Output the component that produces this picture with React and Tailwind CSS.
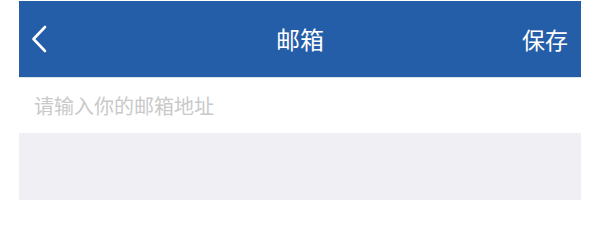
export default function App() {
	return (
		<div className="w-full h-[205px] bg-white pt-px" style={{ fontFamily: '"Noto Sans CJK SC", "Noto Sans", sans-serif' }}>
			<div className="ml-[19px] w-[562px]">
				{/* Header */}
				<div className="h-[76px] bg-[#245ea8] flex items-center justify-between relative text-white">
					<button className="w-[40px] h-full flex items-center pl-[12px]">
						<svg width="16" height="28" viewBox="0 0 16 28" fill="none">
							<path d="M14 2L2.5 14L14 26" stroke="white" strokeWidth="2.6" strokeLinecap="round" strokeLinejoin="round" />
						</svg>
					</button>
					<h1 className="absolute left-1/2 -translate-x-1/2 text-[24px] leading-none">邮箱</h1>
					<button className="pr-[13px] text-[23px] leading-none">保存</button>
				</div>
				<div className="h-px bg-[#dbe5ec]" />

				{/* Input */}
				<div className="h-[55px] bg-white flex items-center px-[15px]">
					<input
						type="email"
						placeholder="请输入你的邮箱地址"
						className="w-full outline-none text-[20px] placeholder:text-[#c9c9c9] bg-transparent"
					/>
				</div>

				<div className="h-[67px] bg-[#efeff4]" />
			</div>
		</div>
	)
}
